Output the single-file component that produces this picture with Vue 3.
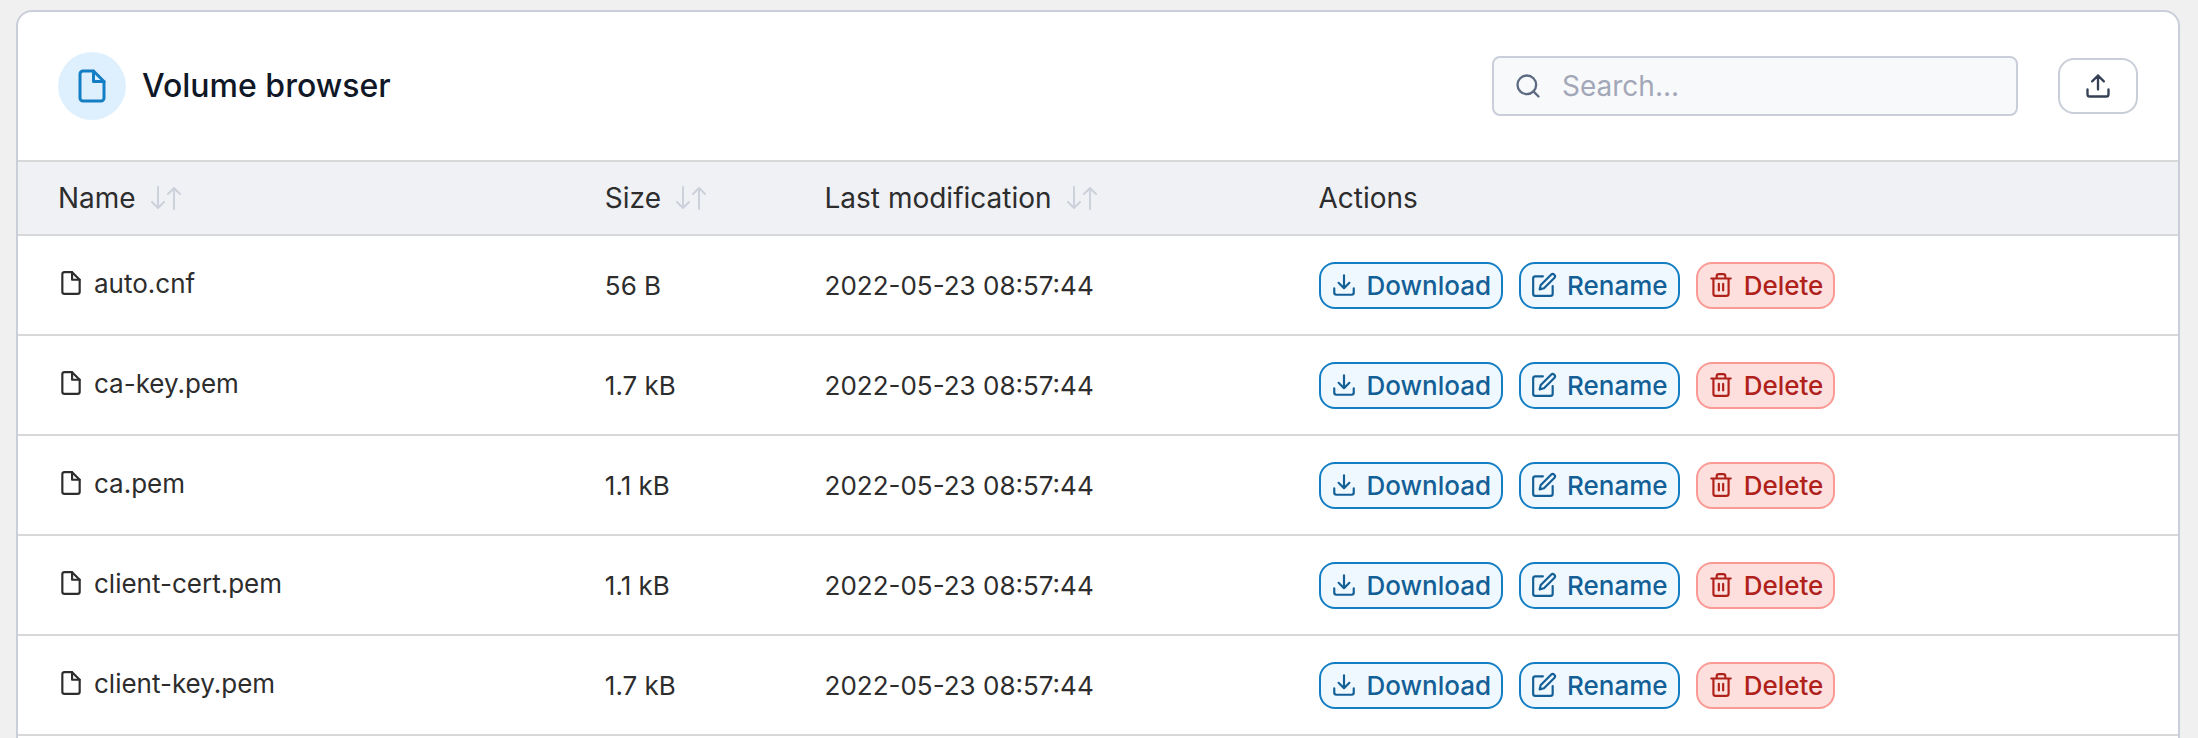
<script setup>
import { ref, computed } from 'vue'

const columns = [
  { key: 'name', label: 'Name', sortable: true },
  { key: 'size', label: 'Size', sortable: true },
  { key: 'date', label: 'Last modification', sortable: true },
  { key: 'tools', label: 'Actions', sortable: false },
]

const files = [
  { name: 'auto.cnf', size: '56 B', date: '2022-05-23 08:57:44' },
  { name: 'ca-key.pem', size: '1.7 kB', date: '2022-05-23 08:57:44' },
  { name: 'ca.pem', size: '1.1 kB', date: '2022-05-23 08:57:44' },
  { name: 'client-cert.pem', size: '1.1 kB', date: '2022-05-23 08:57:44' },
  { name: 'client-key.pem', size: '1.7 kB', date: '2022-05-23 08:57:44' },
]

const query = ref('')
const visible = computed(() =>
  files.filter((f) => f.name.toLowerCase().includes(query.value.toLowerCase())),
)
</script>

<template>
  <main class="page">
    <section class="card">
      <header class="head">
        <span class="badge">
          <svg class="icon" viewBox="0 0 24 24" aria-hidden="true">
            <path d="M13 2H6a2 2 0 0 0-2 2v16a2 2 0 0 0 2 2h12a2 2 0 0 0 2-2V9z" />
            <path d="M13 2v7h7" />
          </svg>
        </span>
        <h1>Volume browser</h1>
        <label class="search">
          <svg class="icon" viewBox="0 0 24 24" aria-hidden="true">
            <circle cx="11" cy="11" r="8" />
            <path d="m21 21-4.35-4.35" />
          </svg>
          <input v-model="query" type="text" placeholder="Search..." aria-label="Search files" />
        </label>
        <button class="upload" type="button" aria-label="Upload file">
          <svg class="icon" viewBox="0 0 24 24" aria-hidden="true">
            <path d="M21 15v4a2 2 0 0 1-2 2H5a2 2 0 0 1-2-2v-4M17 8l-5-5-5 5M12 3v12" />
          </svg>
        </button>
      </header>

      <table>
        <thead>
          <tr>
            <th v-for="c in columns" :key="c.key" :class="c.key" scope="col">
              <button v-if="c.sortable" class="sort" type="button">
                {{ c.label }}
                <svg class="icon" viewBox="0 0 30 24" aria-hidden="true">
                  <path d="M7 1v21M1 16l6 6 6-6M23 23V2M17 8l6-6 6 6" />
                </svg>
              </button>
              <template v-else>{{ c.label }}</template>
            </th>
          </tr>
        </thead>
        <tbody>
          <tr v-for="f in visible" :key="f.name">
            <td class="name">
              <span class="file">
                <svg class="icon" viewBox="0 0 24 24" aria-hidden="true">
                  <path d="M13 2H6a2 2 0 0 0-2 2v16a2 2 0 0 0 2 2h12a2 2 0 0 0 2-2V9z" />
                  <path d="M13 2v7h7" />
                </svg>
                {{ f.name }}
              </span>
            </td>
            <td>{{ f.size }}</td>
            <td>{{ f.date }}</td>
            <td>
              <div class="actions">
                <button class="action" type="button">
                  <svg class="icon" viewBox="0 0 24 24" aria-hidden="true">
                    <path d="M21 15v4a2 2 0 0 1-2 2H5a2 2 0 0 1-2-2v-4M7 10l5 5 5-5M12 15V3" />
                  </svg>
                  Download
                </button>
                <button class="action" type="button">
                  <svg class="icon" viewBox="0 0 24 24" aria-hidden="true">
                    <path d="M11 4H4a2 2 0 0 0-2 2v14a2 2 0 0 0 2 2h14a2 2 0 0 0 2-2v-7" />
                    <path d="M18.5 2.5a2.121 2.121 0 0 1 3 3L12 15l-4 1 1-4z" />
                  </svg>
                  Rename
                </button>
                <button class="action danger" type="button">
                  <svg class="icon" viewBox="0 0 24 24" aria-hidden="true">
                    <path d="M3 6h18M19 6v14a2 2 0 0 1-2 2H7a2 2 0 0 1-2-2V6M8 6V4a2 2 0 0 1 2-2h4a2 2 0 0 1 2 2v2M10 11v6M14 11v6" />
                  </svg>
                  Delete
                </button>
              </div>
            </td>
          </tr>
        </tbody>
      </table>
    </section>
  </main>
</template>

<style>
body {
  background: #f0f0f0;
}
</style>

<style scoped>
.page {
  box-sizing: border-box;
  display: flex;
  flex-direction: column;
  min-height: 100vh;
  padding: 10px 18px 0 16px;
  color: #2d2d2d;
  font-family: Inter, "Liberation Sans", sans-serif;
  font-size: 26px;
}

.card {
  flex: 1;
  overflow: hidden;
  border: 2px solid #c9ced9;
  border-bottom: 0;
  border-radius: 16px 16px 0 0;
  background: #fff;
}

.icon {
  flex: none;
  fill: none;
  stroke: currentColor;
  stroke-width: 2;
  stroke-linecap: round;
  stroke-linejoin: round;
}

button {
  box-sizing: border-box;
  display: flex;
  align-items: center;
  margin: 0;
  font: inherit;
  cursor: pointer;
}

.head {
  display: flex;
  align-items: center;
  padding: 40px;
}

.badge {
  display: flex;
  align-items: center;
  justify-content: center;
  width: 68px;
  height: 68px;
  margin-right: 16px;
  border-radius: 50%;
  background: #def0fe;
  color: #147ec4;
}

.badge .icon {
  width: 36px;
  height: 36px;
}

h1 {
  margin: 0 auto 0 0;
  color: #101828;
  font-size: 32px;
  font-weight: 500;
  line-height: 40px;
}

.search {
  box-sizing: border-box;
  display: flex;
  align-items: center;
  width: 526px;
  height: 60px;
  margin-right: 40px;
  padding: 0 20px;
  border: 2px solid #c9ced9;
  border-radius: 8px;
  background: #f8f9fb;
  color: #5d6b82;
}

.search .icon {
  width: 28px;
  height: 28px;
}

.search input {
  flex: 1;
  min-width: 0;
  margin-left: 20px;
  padding: 0;
  border: 0;
  outline: 0;
  background: none;
  color: #2d2d2d;
  font: inherit;
  font-size: 28px;
}

.search input::placeholder {
  color: #a3a8b8;
  opacity: 1;
}

.upload {
  justify-content: center;
  width: 80px;
  height: 56px;
  border: 2px solid #c9ced9;
  border-radius: 16px;
  background: #fff;
  color: #344054;
}

.upload .icon {
  width: 28px;
  height: 28px;
}

table {
  width: 100%;
  border-collapse: separate;
  border-spacing: 0;
}

th,
td {
  box-sizing: border-box;
  padding: 0;
  border-bottom: 2px solid #d7d9d9;
  text-align: left;
}

th {
  height: 76px;
  border-top: 2px solid #d7d9d9;
  background: #f0f1f5;
  font-size: 28px;
  font-weight: 400;
}

td {
  height: 100px;
}

.name {
  width: 27.17%;
  padding-left: 40px;
}

.size {
  width: 10.17%;
}

.date {
  width: 22.87%;
}

.sort {
  gap: 15px;
  padding: 0;
  border: 0;
  background: none;
  color: inherit;
}

.sort .icon {
  width: 30px;
  height: 24px;
  color: #ccd1db;
}

.file {
  display: flex;
  align-items: center;
  gap: 10px;
  margin-bottom: 4px;
}

.file .icon {
  width: 26px;
  height: 26px;
}

.actions {
  display: flex;
  gap: 16px;
}

.action {
  gap: 10px;
  height: 47px;
  padding: 0 10px;
  border: 2px solid #147ec4;
  border-radius: 16px;
  background: #eff8ff;
  color: #135f96;
  font-weight: 500;
}

.action .icon {
  width: 26px;
  height: 26px;
}

.danger {
  border-color: #fb9a94;
  background: #fddfdd;
  color: #b0211b;
}
</style>
